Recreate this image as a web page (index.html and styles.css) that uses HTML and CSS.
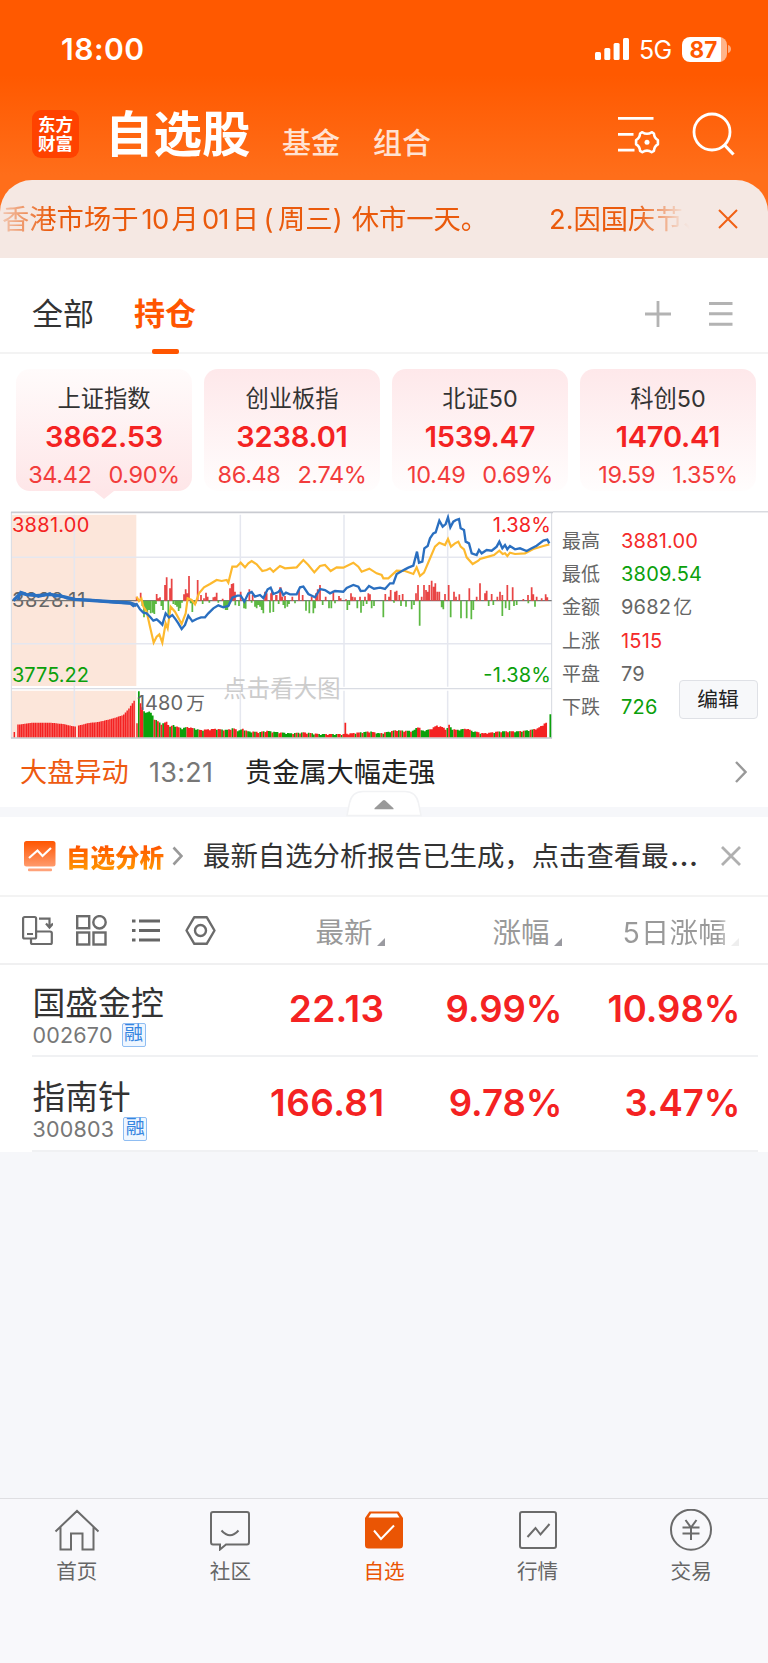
FILE: index.html
```html
<!DOCTYPE html>
<html lang="zh-CN">
<head>
<meta charset="utf-8">
<title>自选股</title>
<link rel="stylesheet" href="styles.css">
</head>
<body>
<div class="app">
  <header class="top">
    <div class="status">
      <span class="clock">18:00</span>
      <svg class="signal" width="34" height="22" viewBox="0 0 34 22" fill="#fff"><rect x="0" y="14" width="6" height="8" rx="1.5"/><rect x="9.3" y="10" width="6" height="12" rx="1.5"/><rect x="18.6" y="5" width="6" height="17" rx="1.5"/><rect x="28" y="0" width="6" height="22" rx="1.5"/></svg>
      <span class="net">5G</span>
      <span class="battery">87</span>
      <svg class="nub" width="4" height="8" viewBox="0 0 4 8"><path d="M0 0C4 1 4 7 0 8Z" fill="#fff" opacity=".5"/></svg>
    </div>
    <nav class="titlebar">
      <div class="logo"><span>东方</span><span>财富</span></div>
      <h1 class="title">自选股</h1>
      <span class="subtab">基金</span>
      <span class="subtab second">组合</span>
      <svg class="ic-set" width="44" height="40" viewBox="0 0 44 40" fill="none" stroke="#fff" stroke-width="2.8"><path d="M1 3.4H36.500M1 19.400H16.500M1 35.200H17.500"/><path d="M25.300 17.200q4.700 3.200 9.400 0l2.200 1.300q.3 4.600 4 6.600v4.200q-3.700 2-4 6.600l-2.200 1.300q-4.700-3.200-9.400 0l-2.200-1.300q-.3-4.600-4-6.600v-4.200q3.700-2 4-6.600z" stroke-width="2.600" stroke-linejoin="round"/><circle cx="30" cy="27.200" r="2.500" fill="#fff" stroke="none"/></svg>
      <svg class="ic-search" width="44" height="44" viewBox="0 0 44 44" fill="none" stroke="#fff" stroke-width="2.800"><circle cx="20" cy="20" r="18"/><path d="M32.500 33l9 9.500" stroke-width="3.200"/></svg>
    </nav>
    <div class="notice">
      <div class="ticker"><span class="msg1">香港市场于<i>10</i>月<i>01</i>日<b class="open">(</b>周三<b>)</b>休市一天。</span><span class="msg2">2.因国庆节、</span></div>
      <svg width="20" height="20" viewBox="0 0 20 20" stroke="#f06014" stroke-width="2" fill="none"><path d="M1 1l18 18M19 1L1 19"/></svg>
    </div>
  </header>

  <div class="tabs">
    <span class="tab">全部</span>
    <span class="tab active">持仓</span>
    <svg class="ic-plus" width="26" height="26" viewBox="0 0 26 26" stroke="#b3b3b3" stroke-width="2.800"><path d="M13 0V26M0 13H26"/></svg>
    <svg width="24" height="26" viewBox="0 0 24 26" stroke="#b3b3b3" stroke-width="3"><path d="M0 2.500H23.500M0 12.800H23.500M0 23.200H23.500"/></svg>
  </div>

  <div class="cards">
    <div class="card on"><span class="name">上证指数</span><span class="val">3862.53</span><span class="chg"><span>34.42</span><span>0.90%</span></span></div>
    <div class="card"><span class="name">创业板指</span><span class="val">3238.01</span><span class="chg"><span>86.48</span><span>2.74%</span></span></div>
    <div class="card"><span class="name">北证50</span><span class="val">1539.47</span><span class="chg"><span>10.49</span><span>0.69%</span></span></div>
    <div class="card"><span class="name">科创50</span><span class="val">1470.41</span><span class="chg"><span>19.59</span><span>1.35%</span></span></div>
  </div>

  <div class="market">
    <svg class="chart" width="553" height="230" viewBox="0 30 1659 690" fill="none">
      <path d="M36 44H409V558H36ZM36 572H409V713H36Z" fill="#fce6da"/>
      <path d="M223 44V713M721 44V560M721 572V713M1032 44V560M1032 572V713M1343 44V560M1343 572V713M36 172H1655M36 431H1655" stroke="#e5e7ef" stroke-width="4.500"/>
      <path d="M34 566H1655" stroke="#d9dce3" stroke-width="4"/>
      <path d="M34 36V715M1655 36V715" stroke="#d5d8df" stroke-width="3"/>
      <path d="M33 37H1659" stroke="#c9cbd1" stroke-width="5"/>
      <path d="M33 714H1656" stroke="#c4c7cd" stroke-width="4"/>
      <g class="axis">
        <text x="36" y="97" textLength="232" fill="#f42222">3881.00</text>
        <text x="36" y="545" textLength="231" fill="#0ba00b">3775.22</text>
        <text x="36" y="321" textLength="220" fill="#666">3828.11</text>
        <text x="1478" y="97" textLength="175" fill="#f42222">1.38%</text>
        <text x="1450" y="545" textLength="203" fill="#0ba00b">-1.38%</text>
      </g>
      <path d="M36 302H1655" stroke="#777" stroke-width="3.500"/>
      <path id="flowUp" stroke="#e84545" stroke-width="5.200"/>
      <path id="flowDown" stroke="#5cb842" stroke-width="5.200"/>
      <path id="volUp" stroke="#f42222" stroke-width="4.400"/>
      <path id="volDown" stroke="#0ba00b" stroke-width="5.200"/>
      <path id="volMix" stroke="#f42222" stroke-width="5.200"/>
      <g class="axis"><text x="411" y="629" textLength="138" fill="#666">1480</text><text x="559" y="629" fill="#666" class="cj">万</text></g>
      <text class="hint" x="670" y="590" textLength="352">点击看大图</text>
      <polyline id="avgLine" stroke="#fdb92e" stroke-width="6.500"/>
      <polyline id="priceLine" stroke="#2a6fc0" stroke-width="7"/>
      <path d="M40 302L62 279 80 284 110 287 150 283 190 290 225 298 300 303 390 309 410 316" stroke="#2a6fc0" stroke-width="10"/>
    </svg>
    <dl class="stats">
      <dt>最高</dt><dd class="up">3881.00</dd>
      <dt>最低</dt><dd class="down">3809.54</dd>
      <dt>金额</dt><dd>9682<span class="unit">亿</span></dd>
      <dt>上涨</dt><dd class="up">1515</dd>
      <dt>平盘</dt><dd>79</dd>
      <dt>下跌</dt><dd class="down">726</dd>
    </dl>
    <button class="edit">编辑</button>
  </div>

  <div class="news">
    <span class="tag">大盘异动</span><span class="time">13:21</span><span class="head">贵金属大幅走强</span>
    <svg width="12" height="22" viewBox="0 0 12 22" fill="none" stroke="#999" stroke-width="2.400"><path d="M1 1l9.500 10L1 21"/></svg>
  </div>
  <div class="band">
    <svg class="fold" width="76" height="27" viewBox="0 0 76 27"><path d="M1 25.500L3.500 13Q6 1.500 17 1.500H59Q70 1.500 72.500 13L75 25.500Z" fill="#fff" stroke="#f1f2f4" stroke-width="1.500"/><path d="M28.500 19.300v-1l8.300-7.800q1.200-1 2.400 0l8.300 7.800v1z" fill="#999"/></svg>
  </div>

  <div class="report">
    <svg width="32" height="31" viewBox="0 0 32 31" fill="none"><defs><linearGradient id="og" x1="0" y1="0" x2="0" y2="1"><stop stop-color="#ff5500"/><stop offset="1" stop-color="#ff9a6c"/></linearGradient></defs><rect width="31.500" height="25.500" rx="2.500" fill="url(#og)"/><rect x="4" y="27.500" width="24" height="2.800" rx="1" fill="#ffa27a"/><path d="M5 17l8.500-7.500 5 5.500L27 7" stroke="#fff" stroke-width="2.200"/></svg>
    <span class="rtitle">自选分析</span>
    <svg width="11" height="20" viewBox="0 0 11 20" fill="none" stroke="#999" stroke-width="2.600"><path d="M1.500 1.500l8 8.500-8 8.500"/></svg>
    <span class="rtext">最新自选分析报告已生成，点击查看最<span class="dots">…</span></span>
    <svg width="20" height="20" viewBox="0 0 20 20" fill="none" stroke="#b0b0b0" stroke-width="2.800"><path d="M1 1l18 18M19 1L1 19"/></svg>
  </div>

  <div class="cols">
    <svg width="31" height="32" viewBox="0 0 31 32" fill="none" stroke="#6b6b6b" stroke-width="2.200"><rect x="1.100" y="2" width="13" height="21.500" rx="1.500"/><path d="M5 19H11M17 3.700H27.500V11M24 8.500l3.500 4 3.500-4M14 16.500H28Q29.800 16.500 29.800 18V27.500Q29.800 29 28.500 29H10.500Q9 29 9 27.500V24"/></svg>
    <svg width="31" height="32" viewBox="0 0 31 32" fill="none" stroke="#6b6b6b" stroke-width="2.400"><rect x="1.200" y="1.200" width="12" height="12"/><circle cx="23.500" cy="7.300" r="6.200"/><rect x="1.200" y="17.500" width="12" height="12"/><rect x="17.500" y="17.500" width="12" height="12"/></svg>
    <svg width="28" height="32" viewBox="0 0 28 32" stroke="#666" stroke-width="3"><path d="M7 6H28M7 15.500H28M7 25H28M0 6H3.500M0 15.500H3.500M0 25H3.500"/></svg>
    <svg width="31" height="32" viewBox="0 0 31 32" fill="none" stroke="#6b6b6b" stroke-width="2.400"><path d="M9.300 2.200H21.700L29.500 15.500 21.700 28.800H9.300L1.500 15.500Z" stroke-linejoin="round"/><circle cx="15.500" cy="15.500" r="5.500"/></svg>
    <span class="col">最新</span><span class="col">涨幅</span><span class="col last">5<em>日涨幅</em></span>
  </div>

  <div class="row first"><div class="stock"><span class="sname">国盛金控</span><span class="code">002670<span class="badge">融</span></span></div><span class="num">22.13</span><span class="num pct">9.99%</span><span class="num pct">10.98%</span></div>
  <div class="row"><div class="stock"><span class="sname">指南针</span><span class="code">300803<span class="badge">融</span></span></div><span class="num">166.81</span><span class="num pct">9.78%</span><span class="num pct">3.47%</span></div>
  <div class="blank"></div>

  <footer class="nav">
    <div class="item"><svg width="46" height="42" viewBox="0 0 46 42"><path d="M1.500 22.500L23 2 44.500 22.500M6.500 18V40.500H17V24.500H28.500V40.500H39.500V18"/></svg><span>首页</span></div>
    <div class="item"><svg width="46" height="42" viewBox="0 0 46 42"><path d="M6 3H40Q42 3 42 5V33Q42 35.500 40 35.500H19L13 40.500V35.500H6Q4 35.500 4 33V5Q4 3 6 3ZM14.500 21.500Q23 31 31.500 21.500"/></svg><span>社区</span></div>
    <div class="item sel"><svg width="46" height="42" viewBox="0 0 46 42"><path d="M8.500 2.500H37.500L42 9V36Q42 39.500 38.500 39.500H7.500Q4 39.500 4 36V9Z" fill="#ea5504" stroke="none"/><path d="M10 4.500H36L38.500 8.500H7.500Z" fill="#fff" stroke="none"/><path d="M13 21.500l7 8.500L33 16.500" stroke="#fff"/></svg><span>自选</span></div>
    <div class="item"><svg width="46" height="42" viewBox="0 0 46 42"><rect x="5" y="3" width="36" height="36" rx="2"/><path d="M12.500 28l8-9 5 6.500L34.500 15"/></svg><span>行情</span></div>
    <div class="item"><svg width="46" height="42" viewBox="0 0 46 42"><circle cx="23" cy="20.700" r="20"/><path d="M17.500 11L23 18.500 28.500 11M23 18.500V31M14.500 18.500H31.500M14.500 24.500H31.500"/></svg><span>交易</span></div>
  </footer>
</div>
<script src="chart.js"></script>
</body>
</html>
```
FILE: styles.css
```css
* { box-sizing: border-box; }
body { margin: 0; font-family: Inter, "Noto Sans CJK SC", sans-serif; background: #fff; color: #333; }
svg { display: block; flex: none; }
.app { width: 768px; height: 1663px; display: flex; flex-direction: column; overflow: hidden; white-space: nowrap; }

.top { height: 258px; background: linear-gradient(#ff5900 0, #ff5900 75px, #ff6e1a 175px, #ff6e1a 258px); color: #fff; display: flex; flex-direction: column; flex: none; }
.status { height: 98px; display: flex; align-items: center; padding-left: 61px; }
.clock { font-size: 30px; font-weight: 600; width: 534px; letter-spacing: .5px; }
.net { font-size: 25px; margin-left: 10px; width: 43px; letter-spacing: -.8px; padding-top: 2px; }
.battery { width: 45px; height: 25px; border-radius: 8px; background: linear-gradient(90deg, #fff 39px, #ffb48a 39px); color: #ff5900; font-size: 22.500px; font-weight: 700; line-height: 25px; padding-left: 7.500px; }
.nub { margin-left: 1px; }
.titlebar { height: 82px; display: grid; grid-template-columns: 74px 176px 91px 244px 75px 44px; padding-left: 32px; }
.logo { width: 47px; height: 48px; margin-top: 12px; border-radius: 9px; background: #ff4200; display: flex; flex-direction: column; justify-content: center; align-items: center; font-size: 17.500px; line-height: 19.500px; font-weight: 700; }
.title { margin: 0 0 0 -1px; font-size: 48.500px; line-height: 74px; font-weight: 700; }
.subtab { font-size: 29px; line-height: 92px; color: #ffe2d3; font-weight: 500; }
.ic-set { margin-top: 17px; }
.ic-search { margin-top: 14px; }
.notice { height: 78px; border-radius: 32px 32px 0 0; background: #f5e8e3; color: #ea5a0c; display: flex; align-items: center; flex: none; }
.ticker { width: 690px; margin-right: 28px; font-size: 27.300px; line-height: 40px; display: flex; overflow: hidden; padding: 2px 0 0 2px; -webkit-mask-image: linear-gradient(90deg, rgba(0,0,0,.2), #000 50px, #000 635px, rgba(0,0,0,.1) 680px, transparent); mask-image: linear-gradient(90deg, rgba(0,0,0,.2), #000 50px, #000 635px, rgba(0,0,0,.1) 680px, transparent); }
.ticker i { font-style: normal; display: inline-block; width: 33px; text-align: center; letter-spacing: -.8px; }
.ticker b { font-weight: 400; display: inline-block; width: 19px; text-align: left; }
.ticker b.open { text-align: center; }
.msg1, .msg2 { flex: none; }
.msg1 { width: 547px; }

.tabs { height: 96px; border-bottom: 2px solid #f3f3f3; display: flex; align-items: center; padding: 18px 0 0 32px; flex: none; }
.tab { position: relative; font-size: 31px; line-height: 76px; width: 102px; }
.tab.active { color: #ff5500; font-weight: 700; width: 511px; }
.tab.active::after { content: ""; position: absolute; left: 18px; bottom: -2px; width: 27px; height: 5px; border-radius: 2px; background: #ff5500; }
.ic-plus { margin-right: 38px; }
.tabs svg { margin-bottom: 1px; }

.cards { display: grid; grid-template-columns: repeat(4, 176px); gap: 12px; padding: 15px 16px 0; height: 154px; flex: none; }
.card { position: relative; height: 122px; border-radius: 14px; background: linear-gradient(#fee8ea, #fffdfd); display: flex; flex-direction: column; align-items: center; }
.card.on { background: linear-gradient(#fffbfb, #fee6e8); }
.card.on::after { content: ""; position: absolute; left: 78px; bottom: -8px; border: 10px solid transparent; border-top: 8px solid #fee6e8; border-bottom: 0; }
.name { font-size: 23.300px; line-height: 36px; margin-top: 12px; }
.val { font-size: 29px; font-weight: 600; line-height: 40px; color: #f42222; letter-spacing: -.2px; }
.chg { font-size: 23.500px; line-height: 36px; color: #f23c3c; display: flex; gap: 17px; letter-spacing: -.4px; }

.market { position: relative; display: flex; height: 232px; flex: none; margin-top: 2px; }
.axis { font-size: 60px; }
.cj { font-size: 56px; }
.hint { font-size: 70px; fill: #ccc; }
.stats { margin: 0; padding: 14.500px 0 0 9px; flex: 1; height: 231px; background: linear-gradient(#d9dbe0, #d9dbe0) 0 1px / 100% 1.500px no-repeat; display: grid; grid-template-columns: 59px 1fr; grid-auto-rows: 33.400px; line-height: 33.400px; color: #666; font-size: 19px; }
.stats dd { margin: 0; font-size: 20px; letter-spacing: .2px; }
.unit { font-size: 19px; margin-left: 2px; }
.stats .up { color: #f42a2a; }
.stats .down { color: #0ba00b; }
.edit { position: absolute; left: 679px; top: 170px; width: 79px; height: 39px; border: 1.500px solid #dfe1e6; border-radius: 4px; background: #f7f8fa; font: 20.800px/34px Inter, "Noto Sans CJK SC", sans-serif; color: #222; padding: 0 1px 0 0; }

.news { height: 65px; display: grid; grid-template-columns: 129px 96px 490px 12px; padding: 0 0 3px 20px; align-items: center; line-height: 60px; font-size: 27.200px; flex: none; }
.tag { color: #ee5a10; }
.time { color: #777; font-size: 27px; letter-spacing: .3px; }
.head { color: #222; }
.news svg { margin-bottom: 3px; }
.band { position: relative; height: 10px; background: #f6f7fa; flex: none; }
.fold { position: absolute; left: 346px; top: -17px; }

.report { height: 80px; border-bottom: 2px solid #f3f3f3; display: grid; grid-template-columns: 42px 106px 31px 518px 20px; padding-left: 24px; align-items: center; flex: none; }
.rtitle { font-size: 24.500px; font-weight: 800; background: linear-gradient(#ff5500 20%, #ff9000 80%); -webkit-background-clip: text; background-clip: text; color: transparent; }
.rtext { font-size: 27.400px; line-height: 40px; }
.dots { margin-left: 1px; letter-spacing: 0; font-size: 33px; line-height: 20px; }

.cols { height: 68px; border-bottom: 2px solid #f0f0f1; display: grid; grid-template-columns: 54px 56px 53px 131px 177px 130px 1fr; padding-left: 21.500px; align-items: center; flex: none; }
.cols svg { margin-top: 2px; }
.col { position: relative; font-size: 28.500px; color: #999; }
.col::after { content: ""; position: absolute; left: 61px; bottom: 5px; border-left: 8px solid transparent; border-bottom: 8px solid #9a9aa0; }
.col.last { color: transparent; background: linear-gradient(90deg, #999 95px, #ddd 106px); -webkit-background-clip: text; background-clip: text; }
.col.last::after { left: 108px; border-bottom-color: #eee; }
.col em { font-style: normal; margin-left: 1px; letter-spacing: .2px; }

.row { height: 94.500px; padding-top: 2px; display: grid; grid-template-columns: 200px 152px 178px 178px; padding-left: 32.500px; background: linear-gradient(#f0f1f3, #f0f1f3) 32px 100% / 726px 2px no-repeat #fff; flex: none; }
.row.first { height: 92px; padding-top: 0; }
.stock { display: flex; flex-direction: column; }
.sname { font-size: 32.800px; line-height: 42px; margin-top: 17px; }
.code { display: flex; align-items: center; font-size: 21.500px; line-height: 24px; color: #777; letter-spacing: .2px; margin-top: -1px; }
.badge { width: 24px; height: 24px; margin-left: 9px; border: 1.500px solid #8fbdf2; border-radius: 2px; background: #eef6ff; color: #3585e0; font-size: 19px; line-height: 20px; display: flex; justify-content: center; }
.num { font-size: 37px; font-weight: 600; color: #f42222; text-align: right; line-height: 88px; letter-spacing: .4px; }
.num.pct { font-size: 36.500px; letter-spacing: 0; }
.blank { flex: 1; background: #f6f7fa; }

.nav { height: 165px; background: #f8f8fb; border-top: 1.500px solid #dfdfe2; display: grid; grid-template-columns: repeat(5, 1fr); padding-top: 10px; flex: none; color: #666; }
.item { display: flex; flex-direction: column; align-items: center; font-size: 20.600px; line-height: 30px; gap: 6px; }
.item svg { fill: none; stroke: #6b6b6b; stroke-width: 2; }
.sel { color: #ea5504; }
```
FILE: chart.js
```js
// Chart coordinates: three units per CSS pixel.
const byId = id => document.getElementById(id);
const parse = s => s.split(' ').map(p => p.split(',').map(Number));

const flowUp = parse('410,290 422,278 470,282 475,295 480,292 495,255 500,232 510,265 515,236 552,283 557,268 562,280 567,228 593,240 603,285 612,295 618,278 623,290 640,292 645,290 650,278 668,296 690,265 695,252 700,250 705,275 722,275 748,268 758,285 795,275 800,280 816,270 828,285 842,262 847,290 813,280 830,285 840,262 855,288 877,290 897,270 908,285 935,290 948,280 953,268 960,255 977,290 1000,272 1017,288 1022,295 1038,298 1053,280 1058,290 1065,292 1080,290 1095,290 1105,280 1110,283 1156,282 1167,290 1172,270 1185,275 1190,272 1198,285 1208,282 1248,280 1254,255 1265,290 1272,255 1278,270 1283,275 1288,255 1295,242 1301,260 1306,250 1312,275 1318,275 1335,282 1346,255 1362,275 1368,290 1378,283 1408,265 1430,290 1440,250 1455,280 1460,272 1475,282 1492,290 1500,275 1507,285 1522,255 1538,262 1570,297 1584,285 1595,262 1600,283 1610,290 1625,295 1637,283 1642,292');
const flowDown = parse('427,318 432,352 437,330 442,345 447,330 452,340 458,338 463,342 468,312 484,318 489,330 505,345 520,312 526,315 531,320 536,333 541,325 546,308 572,310 577,336 583,312 588,310 608,312 628,308 655,308 672,322 677,330 682,330 687,318 706,316 717,318 732,325 737,326 755,308 765,320 770,325 775,315 780,320 785,330 790,340 810,338 820,336 836,312 850,315 855,325 862,320 867,312 885,310 918,332 928,340 940,340 945,325 968,315 987,325 994,325 1005,310 1042,330 1048,315 1072,325 1083,338 1090,318 1100,312 1115,325 1122,318 1150,352 1182,308 1203,318 1218,320 1235,328 1242,315 1259,377 1325,322 1330,328 1352,352 1383,355 1400,355 1414,358 1420,330 1466,318 1480,315 1507,348 1517,325 1528,330 1542,318 1550,315 1585,310 1605,320');
const price = '55,300 62,276 75,280 80,285 100,282 115,290 130,287 150,280 165,290 180,285 200,295 225,298 270,300 300,303 350,308 390,310 400,318 410,312 420,328 430,338 440,340 450,350 460,362 470,358 478,365 487,374 497,340 507,352 517,345 527,358 535,370 545,387 555,375 565,347 577,364 590,357 603,352 615,352 625,340 640,325 655,316 670,322 685,318 697,293 712,287 722,287 733,305 745,280 755,276 765,290 780,285 790,294 803,268 812,263 820,282 835,276 842,268 850,285 858,278 870,283 890,283 900,262 910,260 925,282 945,292 960,267 975,270 990,280 1005,273 1030,275 1040,264 1060,255 1075,260 1082,273 1095,272 1107,258 1122,266 1140,263 1155,267 1170,250 1180,250 1190,222 1202,215 1215,208 1225,203 1240,197 1251,155 1257,188 1267,185 1273,145 1283,138 1290,115 1300,100 1307,97 1318,62 1328,80 1337,72 1344,52 1351,82 1360,65 1368,60 1377,57 1382,85 1392,90 1397,125 1407,130 1415,160 1430,165 1437,150 1445,160 1460,150 1475,152 1490,140 1498,125 1507,145 1515,135 1522,148 1530,138 1545,148 1560,145 1580,153 1595,145 1610,137 1630,122 1642,119 1648,130';
const avg = '410,290 417,303 424,295 430,320 440,335 450,380 461,428 470,410 478,403 487,428 497,370 503,385 512,320 525,335 545,372 557,340 563,295 575,300 585,313 597,280 612,262 630,252 650,240 665,243 680,240 685,248 697,200 710,200 722,188 735,202 745,190 755,183 770,193 787,213 800,210 810,205 820,215 840,198 855,205 890,202 910,180 925,195 943,217 960,198 975,195 992,213 1010,202 1030,203 1060,188 1075,200 1085,215 1108,206 1130,220 1145,225 1150,235 1165,235 1190,212 1215,213 1240,222 1250,202 1260,228 1272,218 1288,180 1305,140 1318,128 1335,135 1344,117 1353,140 1365,130 1375,125 1382,140 1392,148 1400,172 1418,192 1435,182 1440,177 1465,170 1482,165 1498,152 1508,162 1515,160 1522,168 1530,158 1545,162 1575,160 1600,147 1630,138 1648,133';
const preOpen = parse('53,674 100,668 150,668 190,672 225,680 260,670 300,665 340,655 370,645 385,628 405,598');
const volume = parse('416,570 421,605 427,622 435,640 445,632 455,640 462,655 475,665 485,672 500,665 510,680 520,675 545,685 565,680 600,690 650,686 680,690 700,684 715,692 728,686 745,694 780,696 800,692 830,696 870,700 910,697 960,702 1030,702 1110,694 1140,700 1165,695 1190,690 1210,692 1240,692 1255,678 1265,692 1290,688 1310,676 1325,680 1340,688 1347,674 1355,685 1370,690 1400,685 1415,692 1450,700 1500,694 1550,694 1590,690 1615,684 1637,668');
const tones = 'GRRGGGGGGRGRGRGRRRGRGGRRGGGGRRRRGGGRRGRRRRRRRGRRGRGGRRGRRGGGRGRGGGRGRRGRGRRGGRGG';

const bars = (list, base) => list.map(([x, y]) => `M${x} ${base}V${y}`).join('');
function sample(points, x) {
  const i = points.findIndex(p => p[0] >= x);
  if (i <= 0) return points[i < 0 ? points.length - 1 : 0][1];
  const [a, b] = [points[i - 1], points[i]];
  return a[1] + (b[1] - a[1]) * (x - a[0]) / (b[0] - a[0]);
}

byId('flowUp').setAttribute('d', bars(flowUp, 302));
byId('flowDown').setAttribute('d', bars(flowDown, 302));
byId('priceLine').setAttribute('points', price);
byId('avgLine').setAttribute('points', avg);

const early = [[43, 696], [411, 670]];
for (let x = 54; x < 406; x += 5.2) if (Math.abs(x - 231) > 3) early.push([x, sample(preOpen, x)]);
byId('volUp').setAttribute('d', bars(early, 712));

const red = [[1036, 668]], green = [[1651, 643]];
for (let x = 416.500, i = 0; x < 1640; x += 5.2, i++) {
  const steady = (x > 1290 && x < 1330) || x > 1598;
  const tone = steady ? 'R' : tones[i % tones.length];
  (tone === 'R' ? red : green).push([x, sample(volume, x) + (i % 4 === 1 ? 3 : 0)]);
}
byId('volMix').setAttribute('d', bars(red, 712));
byId('volDown').setAttribute('d', bars(green, 712));
```
